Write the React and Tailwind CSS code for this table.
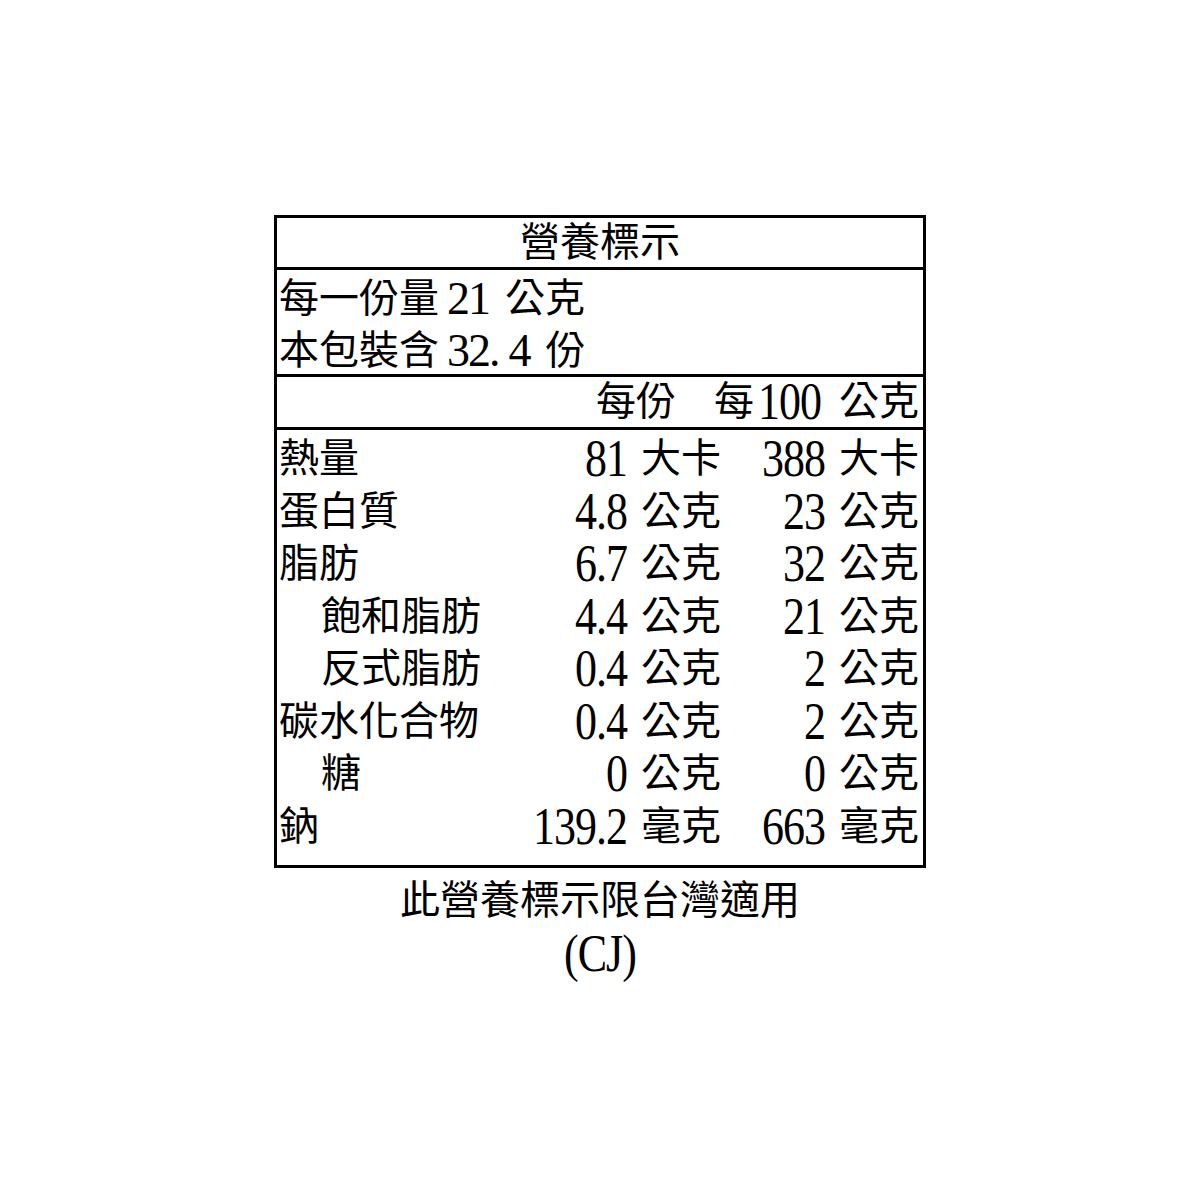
import React from 'react'

const rows = [
  { label: '熱量', a: '81', au: '大卡', b: '388', bu: '大卡' },
  { label: '蛋白質', a: '4.8', au: '公克', b: '23', bu: '公克' },
  { label: '脂肪', a: '6.7', au: '公克', b: '32', bu: '公克' },
  { label: '飽和脂肪', indent: true, a: '4.4', au: '公克', b: '21', bu: '公克' },
  { label: '反式脂肪', indent: true, a: '0.4', au: '公克', b: '2', bu: '公克' },
  { label: '碳水化合物', a: '0.4', au: '公克', b: '2', bu: '公克' },
  { label: '糖', indent: true, a: '0', au: '公克', b: '0', bu: '公克' },
  { label: '鈉', a: '139.2', au: '毫克', b: '663', bu: '毫克' },
]

// tall, narrow digits like the printed label
function Num({ children, className = '' }) {
  return (
    <span className={`inline-block scale-y-[1.18] whitespace-nowrap text-[44px] leading-[38px] tracking-[-1px] ${className}`}>
      {children}
    </span>
  )
}

function Amount({ n, u, className = '' }) {
  return (
    <div className={`flex items-center justify-end whitespace-nowrap ${className}`}>
      <Num>{n}</Num>
      <span className="ml-[14px] w-[80px] shrink-0">{u}</span>
    </div>
  )
}

export default function App() {
  return (
    <div
      className="min-h-[1200px] bg-white pt-[215px] text-[40px] text-black"
      style={{ fontFamily: "'Liberation Serif', 'Noto Sans CJK TC', serif" }}
    >
      <div className="mx-auto w-[652px] border-[3px] border-black">
        {/* title */}
        <div className="flex h-[52px] items-center justify-center border-b-[3px] border-black leading-none">
          營養標示
        </div>

        {/* serving info */}
        <div className="h-[107px] whitespace-nowrap border-b-[3px] border-black pl-[2px] pt-[3px] leading-[52px]">
          <div className="flex h-[52px] items-center">
            每一份量<span className="ml-[8px] text-[46px] leading-[40px] tracking-[-2px]">21</span>
            <span className="ml-[16px]">公克</span>
          </div>
          <div className="flex h-[52px] items-center">
            本包裝含<span className="ml-[8px] text-[46px] leading-[40px] tracking-[-2px]">32.</span>
            <span className="ml-[10px] text-[46px] leading-[40px]">4</span>
            <span className="ml-[14px]">份</span>
          </div>
        </div>

        {/* column headers */}
        <div className="flex h-[53px] items-center whitespace-nowrap border-b-[3px] border-black pr-[4px] leading-none">
          <div className="flex-1" />
          <div className="flex w-[188px] justify-end pr-[33px]">每份</div>
          <div className="flex w-[210px] items-center justify-end">
            每<Num className="ml-[4px]">100</Num>
            <span className="ml-[18px] shrink-0">公克</span>
          </div>
        </div>

        {/* nutrients */}
        <div className="pb-[12px] pl-[2px] pr-[4px] pt-[3px]">
          {rows.map((r) => (
            <div key={r.label} className="flex h-[52.5px] items-center whitespace-nowrap leading-none">
              <div className={`flex-1 ${r.indent ? 'pl-[42px]' : ''}`}>{r.label}</div>
              <Amount n={r.a} u={r.au} className="w-[200px]" />
              <Amount n={r.b} u={r.bu} className="w-[198px]" />
            </div>
          ))}
        </div>
      </div>

      <div className="mt-[6px] text-center leading-[54px]">
        <div>此營養標示限台灣適用</div>
        <div>
          <Num>(CJ)</Num>
        </div>
      </div>
    </div>
  )
}
